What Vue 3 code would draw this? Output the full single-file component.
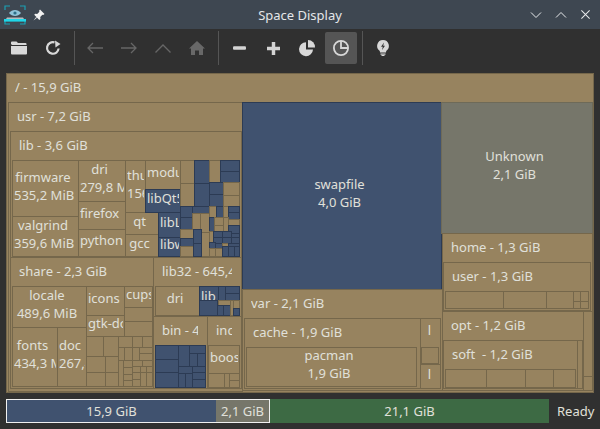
<template>
  <div class="window">
    <!-- title bar -->
    <div class="titlebar">
      <svg class="logo" viewBox="0 0 22 20" fill="none">
        <path d="M1 5V1h5M16 1h5v4M1 15v4h5M16 19h5v-4" stroke="#1b9fb3" stroke-width="1.2" />
        <path d="M5 8c3-4 9-4 12 0-3 4-9 4-12 0z" fill="#8fc4da" />
        <circle cx="11" cy="8" r="1.6" fill="#2d6f88" />
        <path d="M3 12.5h16l1 1.5H2z" fill="#b6bcc0" />
        <rect x="0" y="14" width="22" height="2.6" fill="#1fd6e8" />
      </svg>
      <svg class="pin" viewBox="0 0 12 12" fill="#f2f2f2">
        <path d="M7 0.5l4.5 4.5-1.3 1-.8-.3-2.2 2.2.2 2-1.1 1L1.2 5.8l1-1.1 2 .2L6.4 2.7l-.3-.9z" />
        <path d="M3.2 8L0.5 11.5 4 8.8z" />
      </svg>
      <div class="title">Space Display</div>
      <div class="wm-buttons">
        <svg viewBox="0 0 12 8" class="wm-icon"><path d="M1 1.5l5 5 5-5" /></svg>
        <svg viewBox="0 0 12 8" class="wm-icon"><path d="M1 6.5l5-5 5 5" /></svg>
        <svg viewBox="0 0 12 12" class="wm-close"><path d="M1.5 1.5l9 9M10.5 1.5l-9 9" /></svg>
      </div>
    </div>

    <!-- toolbar -->
    <div class="toolbar">
      <button class="tool">
        <svg viewBox="0 0 16 14" class="ic" fill="#d8d8d8">
          <path d="M0 3V1.500A1 1 0 0 1 1 .5h4.500l1.500 1.500h7.500a1 1 0 0 1 1 1V4H1z" />
          <path d="M0 5h16v7.500a1 1 0 0 1-1 1H1a1 1 0 0 1-1-1z" />
        </svg>
      </button>
      <button class="tool">
        <svg viewBox="0 0 16 16" class="ic" fill="none" stroke="#d8d8d8" stroke-width="2.200">
          <path d="M13.600 8.500A5.800 5.800 0 1 1 9.500 2.400" />
          <path d="M9 0l5.500 3.500-5 3.500z" fill="#d8d8d8" stroke="none" transform="translate(1 .5)" />
        </svg>
      </button>
      <span class="sep"></span>
      <button class="tool">
        <svg viewBox="0 0 16 12" class="ic off"><path d="M16 6H1M6 1L1 6l5 5" /></svg>
      </button>
      <button class="tool">
        <svg viewBox="0 0 16 12" class="ic off"><path d="M0 6h15M10 1l5 5-5 5" /></svg>
      </button>
      <button class="tool">
        <svg viewBox="0 0 16 10" class="ic off"><path d="M.5 9.500L8 2l7.500 7.500" /></svg>
      </button>
      <button class="tool">
        <svg viewBox="0 0 16 14" class="ic" fill="#686868">
          <path d="M8 0l8 7.500h-2V14h-4V9.500H6V14H2V7.500H0z" />
        </svg>
      </button>
      <span class="sep"></span>
      <button class="tool">
        <svg viewBox="0 0 12 4" class="ic small"><rect y="0" width="12" height="3.200" rx="1" fill="#d4d4d4" /></svg>
      </button>
      <button class="tool">
        <svg viewBox="0 0 12 12" class="ic small">
          <path d="M4.400 0h3.200v4.400H12v3.200H7.600V12H4.400V7.600H0V4.400h4.400z" fill="#d4d4d4" />
        </svg>
      </button>
      <button class="tool">
        <svg viewBox="0 0 16 16" class="ic" fill="#d8d8d8">
          <path d="M7 2.200A7 7 0 1 0 14 9.500H7z" />
          <path d="M9 0a7 7 0 0 1 7 7.500H9z" />
        </svg>
      </button>
      <button class="tool active">
        <svg viewBox="0 0 16 16" class="ic" fill="none" stroke="#d8d8d8" stroke-width="1.800">
          <circle cx="8" cy="8" r="7.100" />
          <path d="M8 1v7h7" />
        </svg>
      </button>
      <span class="sep"></span>
      <button class="tool">
        <svg viewBox="0 0 12 16" class="ic narrow">
          <path d="M6 0a6 6 0 0 1 3.200 11l-.2 1.500H3L2.800 11A6 6 0 0 1 6 0z" fill="#d8d8d8" />
          <rect x="3.500" y="13.500" width="5" height="1.200" fill="#d8d8d8" />
          <rect x="4.500" y="15" width="3" height="1" fill="#d8d8d8" />
          <path d="M7 2.500L4 6.800h1.800L5 10l3-4.300H6.200z" fill="#333" />
        </svg>
      </button>
    </div>

    <!-- treemap -->
    <div class="treemap">
      <div
        v-for="(c, i) in cells"
        :key="i"
        class="cell"
        :class="[c.tone, c.head ? 'head' : '']"
        :style="c.style"
      >
        <div v-if="c.lines" class="cell-label">
          <div v-for="(l, j) in c.lines" :key="j" class="cell-line">{{ l }}</div>
        </div>
      </div>
    </div>

    <!-- usage bar -->
    <div class="statusbar">
      <div class="usage">
        <div class="seg used">15,9 GiB</div>
        <div class="seg unknown">2,1 GiB</div>
      </div>
      <div class="seg free">21,1 GiB</div>
      <div class="ready">Ready</div>
    </div>
  </div>
</template>

<script setup>
const ORIGIN_X = 6
const ORIGIN_Y = 73

// page coordinates of the grid lines: x1, y1, x2, y2, tone, label, header?
const nodes = [
  [6, 73, 593, 392, 't', '/ - 15,9 GiB', true],
  [8, 102, 242, 391, 't', 'usr - 7,2 GiB', true],
  [10, 131, 241, 257, 't', 'lib - 3,6 GiB', true],
  [12, 160, 78, 216, 't', 'firmware\n535,2 MiB'],
  [12, 216, 78, 256, 't', 'valgrind\n359,6 MiB'],
  [78, 160, 125, 201, 't', 'dri\n279,8 MiB'],
  [78, 201, 125, 229, 't', 'firefox'],
  [78, 229, 125, 256, 't', 'python'],
  [125, 160, 145, 212, 't', 'thunderbird\n156,0 MiB'],
  [125, 212, 158, 234, 't', 'qt'],
  [125, 234, 158, 256, 't', 'gcc'],
  [145, 160, 180, 189, 't', 'modules'],
  [145, 189, 180, 212, 'b', 'libQt5'],
  [158, 212, 180, 237, 'b', 'libLLVM'],
  [158, 237, 180, 256, 'b', 'libwebkit'],

  // small files of lib
  [180, 160, 194, 183, 't'], [180, 183, 194, 206, 't'],
  [194, 160, 209, 183, 'b'], [194, 183, 209, 206, 'b'],
  [209, 160, 220, 182, 't'], [220, 160, 239, 171, 'b'], [220, 171, 239, 182, 'b'],
  [209, 182, 223, 194, 'b'], [209, 194, 223, 206, 'b'],
  [223, 182, 239, 195, 't'], [223, 195, 239, 206, 't'],
  [180, 206, 192, 217, 'b'], [180, 217, 192, 229, 'b'], [192, 206, 209, 213, 'b'],
  [192, 213, 200, 229, 't'], [200, 213, 209, 232, 't'], [201, 232, 209, 256, 't'],
  [180, 229, 193, 238, 't'], [180, 238, 193, 246, 'b'], [180, 246, 193, 256, 't'],
  [193, 229, 201, 243, 'b'], [193, 243, 201, 256, 'b'],
  [209, 206, 216, 217, 't'], [216, 206, 223, 217, 'b'], [223, 206, 228, 217, 't'],
  [228, 206, 239, 212, 'b'], [228, 212, 239, 219, 'b'],
  [209, 217, 214, 231, 'b'], [214, 217, 223, 225, 't'], [214, 225, 223, 231, 't'],
  [223, 217, 228, 231, 't'], [228, 219, 239, 225, 't'], [228, 225, 239, 233, 'b'],
  [209, 231, 213, 242, 't'], [213, 231, 222, 237, 'b'], [222, 231, 231, 237, 'b'],
  [231, 233, 239, 237, 'b'], [213, 237, 222, 243, 'b'], [222, 237, 231, 243, 'b'],
  [231, 237, 239, 243, 'b'], [209, 242, 215, 248, 'b'], [215, 243, 222, 248, 'b'],
  [222, 243, 228, 246, 't'], [228, 243, 239, 246, 'b'], [209, 248, 215, 256, 't'],
  [215, 248, 222, 256, 't'], [222, 246, 228, 256, 'b'], [228, 246, 234, 256, 'b'],
  [234, 246, 239, 256, 'b'],

  [10, 257, 153, 388, 't', 'share - 2,3 GiB', true],
  [12, 286, 86, 327, 't', 'locale\n489,6 MiB'],
  [12, 327, 57, 386, 't', 'fonts\n434,3 MiB'],
  [57, 327, 86, 386, 't', 'doc\n267,4 MiB'],
  [86, 286, 124, 315, 't', 'icons'],
  [124, 286, 152, 307, 't', 'cups'],
  [86, 315, 124, 336, 't', 'gtk-doc'],
  [124, 307, 152, 321, 't'], [124, 321, 152, 336, 't'],

  // small files of share
  [86, 336, 103, 356, 't'], [103, 336, 118, 356, 't'],
  [86, 356, 105, 372, 't'], [105, 356, 118, 372, 't'],
  [86, 372, 105, 386, 't'], [105, 372, 118, 386, 't'],
  [118, 336, 132, 347, 't'], [132, 336, 142, 347, 't'], [142, 336, 152, 347, 't'],
  [118, 347, 124, 360, 't'], [124, 347, 132, 360, 't'], [132, 347, 139, 360, 't'],
  [139, 347, 152, 353, 't'], [139, 353, 152, 360, 't'],
  [118, 360, 123, 386, 't'], [123, 360, 132, 367, 't'], [123, 367, 132, 374, 't'],
  [123, 374, 132, 380, 't'], [123, 380, 132, 386, 't'],
  [132, 360, 142, 366, 't'], [142, 360, 152, 366, 't'],
  [132, 366, 140, 372, 't'], [140, 366, 146, 372, 't'], [146, 366, 152, 372, 't'],
  [132, 372, 140, 379, 't'], [132, 379, 140, 386, 't'],
  [140, 372, 146, 386, 't'], [146, 372, 152, 386, 't'],

  [153, 257, 241, 316, 't', 'lib32 - 645,4 MiB', true],
  [155, 286, 199, 315, 't', 'dri'],
  [199, 286, 239, 315, 'b'],
  [199, 286, 218, 300, 'b', 'lib', 'small'],
  [218, 286, 225, 300, 'b'], [225, 286, 239, 293, 'b'], [225, 293, 239, 300, 'b'],
  [199, 300, 217, 315, 'b'], [218, 300, 230, 305, 't'], [217, 305, 223, 315, 'b'],
  [223, 305, 230, 315, 'b'], [230, 300, 233, 315, 't'], [233, 300, 239, 308, 't'],
  [233, 308, 239, 315, 'b'],

  [153, 316, 207, 388, 't', 'bin - 4', true],
  [155, 345, 205, 387, 'b'],
  [155, 345, 178, 359, 'b'], [155, 359, 178, 372, 'b'], [155, 372, 178, 387, 'b'],
  [178, 345, 189, 366, 'b'], [189, 345, 205, 353, 'b'], [189, 353, 197, 366, 'b'],
  [197, 353, 205, 366, 'b'], [178, 366, 192, 373, 'b'], [192, 366, 205, 372, 'b'],
  [192, 372, 205, 379, 'b'], [178, 373, 185, 387, 'b'], [185, 373, 192, 387, 'b'],
  [192, 379, 205, 387, 'b'],

  [207, 316, 241, 388, 't', 'include', true],
  [208, 345, 239, 373, 't', 'boost'],
  [208, 373, 224, 387, 't'], [224, 373, 229, 387, 't'],
  [229, 373, 239, 380, 't'], [229, 380, 239, 387, 't'],

  [242, 102, 441, 289, 'b', 'swapfile\n4,0 GiB'],
  [242, 289, 442, 390, 't', 'var - 2,1 GiB', true],
  [244, 318, 420, 388, 't', 'cache - 1,9 GiB', true],
  [246, 347, 416, 386, 't', 'pacman\n1,9 GiB'],
  [420, 318, 440, 364, 't', 'l', 'top'],
  [421, 347, 438, 363, 't'],
  [420, 364, 440, 388, 't', 'l', 'slim'],

  [441, 102, 592, 233, 'g', 'Unknown\n2,1 GiB'],
  [442, 233, 592, 311, 't', 'home - 1,3 GiB', true],
  [443, 262, 590, 310, 't', 'user - 1,3 GiB', true],
  [445, 291, 503, 308, 't'], [503, 291, 546, 308, 't'], [546, 291, 573, 308, 't'],
  [573, 291, 580, 301, 't'], [580, 291, 588, 301, 't'],
  [573, 301, 580, 308, 't'], [580, 301, 588, 308, 't'],

  [442, 311, 583, 390, 't', 'opt - 1,2 GiB', true],
  [443, 340, 577, 388, 't', 'soft\u00a0 - 1,2 GiB', true],
  [445, 369, 486, 387, 't'], [486, 369, 525, 387, 't'],
  [525, 369, 553, 387, 't'], [553, 369, 575, 387, 't'],
  [577, 340, 582, 388, 't'],
  [583, 311, 592, 376, 't'], [583, 376, 592, 390, 't'],
]

const tones = { t: 'tan', b: 'blue', g: 'grey' }

const cells = nodes.map(([x1, y1, x2, y2, tone, label, mode]) => ({
  tone: [tones[tone], typeof mode === 'string' ? mode : ''].join(' '),
  head: mode === true,
  lines: label ? label.split('\n') : null,
  style: {
    left: `${x1 - ORIGIN_X}px`,
    top: `${y1 - ORIGIN_Y}px`,
    width: `${x2 - x1 + 1}px`,
    height: `${y2 - y1 + 1}px`,
  },
}))
</script>

<style scoped>
.window {
  width: 600px;
  height: 429px;
  display: flex;
  flex-direction: column;
  background: #303030;
  color: #e0e0da;
  font-family: "Noto Sans", sans-serif;
  font-size: 13px;
  overflow: hidden;
}

/* title bar */
.titlebar {
  height: 29px;
  flex: none;
  display: flex;
  align-items: center;
  background: #3e4751;
}

.logo {
  width: 22px;
  height: 20px;
  margin: 0 0 0 4px;
  flex: none;
}

.pin {
  width: 12px;
  height: 12px;
  margin-left: 7px;
  flex: none;
}

.title {
  flex: 1;
  text-align: center;
  color: #e4e6e8;
  margin-left: 25px;
}

.wm-buttons {
  display: flex;
  align-items: center;
  gap: 13px;
  margin-right: 9px;
}

.wm-icon {
  width: 12px;
  height: 8px;
  fill: none;
  stroke: #e8eaec;
  stroke-width: 1;
}

.wm-close {
  width: 11px;
  height: 11px;
  fill: none;
  stroke: #e8eaec;
  stroke-width: 1.100;
}

/* toolbar */
.toolbar {
  height: 41px;
  flex: none;
  display: flex;
  align-items: center;
  gap: 2px;
  padding: 3px 0 6px 3px;
  box-sizing: border-box;
}

.tool {
  width: 32px;
  height: 32px;
  flex: none;
  padding: 0;
  border: none;
  border-radius: 2px;
  background: none;
  display: flex;
  align-items: center;
  justify-content: center;
}

.tool.active {
  background: #555555;
}

.ic {
  width: 16px;
  height: 16px;
  overflow: visible;
}

.ic.small {
  width: 13px;
  height: 13px;
}

.ic.narrow {
  width: 12px;
  height: 16px;
}

.ic.off {
  fill: none;
  stroke: #666666;
  stroke-width: 1.300;
}

.sep {
  width: 1px;
  height: 34px;
  flex: none;
  margin: 0 2px 0 3px;
  background: #555555;
}

/* treemap */
.treemap {
  position: relative;
  flex: none;
  width: 588px;
  height: 320px;
  margin: 3px 0 0 6px;
}

.cell {
  position: absolute;
  box-sizing: border-box;
  border: 1px solid #75674b;
  display: flex;
  align-items: center;
  justify-content: center;
  overflow: hidden;
}

.cell.tan {
  background: #97835f;
}

.cell.blue {
  background: #40526f;
  border-color: #2c3b54;
}

.cell.grey {
  background: #76766a;
  border-color: #6e6a58;
}

/* the label clips at 2px from the box, the text centres a little left of middle */
.cell-label {
  width: calc(100% - 2px);
  padding-bottom: 6px;
  line-height: 18px;
  overflow: hidden;
  white-space: nowrap;
}

.cell-line {
  text-align: center;
  margin-right: 5px;
}

.cell.head {
  align-items: flex-start;
  justify-content: flex-start;
}

.cell.head .cell-label {
  width: auto;
  margin: 4px 9px 0 8px;
  padding: 0;
}

.cell.head .cell-line {
  text-align: left;
  margin-right: 0;
}

.cell.top,
.cell.small {
  align-items: flex-start;
}

.cell.top .cell-label {
  margin-top: 2px;
}

.cell.top .cell-line,
.cell.slim .cell-line {
  margin-right: 2px;
}

/* usage bar */
.statusbar {
  display: flex;
  align-items: stretch;
  height: 24px;
  margin: 6px 0 0 6px;
}

.usage {
  display: flex;
  width: 264px;
  box-sizing: border-box;
  border: 1px solid #f0f0f0;
}

.seg {
  display: flex;
  align-items: center;
  justify-content: center;
}

.used {
  width: 209px;
  background: #40526f;
}

.unknown {
  flex: 1;
  background: #76766a;
}

.free {
  width: 279px;
  background: #3d6a44;
}

.ready {
  margin-left: 8px;
  line-height: 24px;
}
</style>

<style>
html,
body {
  background: #303030;
}
</style>
